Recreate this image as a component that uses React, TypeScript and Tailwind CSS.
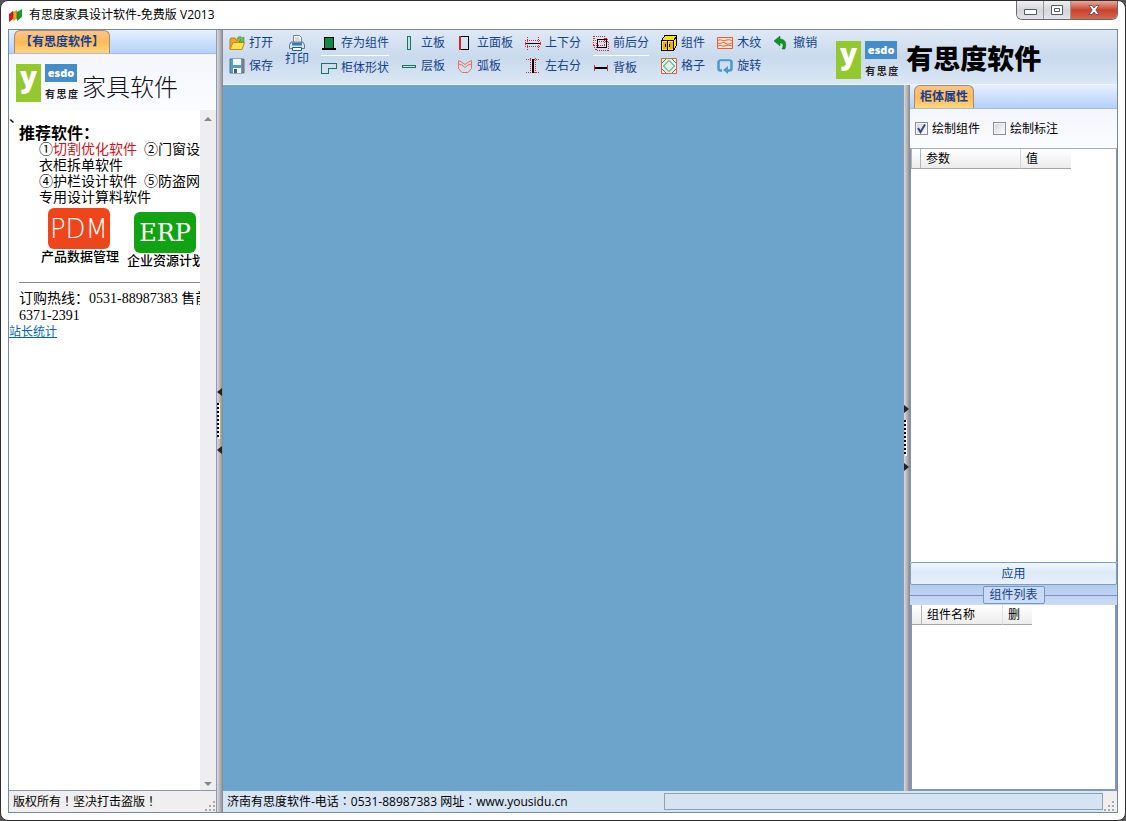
import { useState, type ReactNode } from 'react';

function TabStrip({ label, className = '' }: { label: string; className?: string }) {
  return (
    <div role="tablist" className={`flex h-6 shrink-0 items-end border-b border-[#a3bde0] bg-linear-to-b from-[#e6f0fd] to-[#b4d1fb] ${className}`}>
      <button
        role="tab"
        aria-selected="true"
        className="h-[23px] rounded-t-md border border-b-0 border-[#a48a70] bg-linear-to-b from-[#f9c58c] via-[#fdb95a] to-[#ffd67c] px-[5px] text-xs font-bold whitespace-nowrap text-[#123f91]"
      >
        {label}
      </button>
    </div>
  );
}

function Logo() {
  return (
    <div className="flex shrink-0 gap-1">
      <div className="flex h-[38px] w-[25px] justify-center bg-[#93c82e] font-['Open_Sans',sans-serif] text-[28px] leading-6 font-extrabold text-white">y</div>
      <div className="flex w-[33px] flex-col gap-1">
        <div className="h-[18px] w-8 bg-[#448cca] text-center font-['Open_Sans',sans-serif] text-[11px] leading-[18px] font-extrabold text-white">esdo</div>
        <div className="flex justify-between text-[10px] leading-4 font-bold text-[#222]">
          <span>有</span>
          <span>思</span>
          <span>度</span>
        </div>
      </div>
    </div>
  );
}

function Icon({ children }: { children: ReactNode }) {
  return (
    <svg width="16" height="16" viewBox="0 0 16 16" fill="none" className="shrink-0" aria-hidden="true">
      {children}
    </svg>
  );
}

const icons = {
  open: (
    <Icon>
      <path d="M1 14V4l1-1h4l1 2h6v9z" fill="#e9a928" stroke="#b97e12" />
      <path d="M1 14.500 4 7.500h11.500L13 14.500z" fill="#ffe04f" stroke="#c38b15" />
      <path d="M8 4c1-3 4-3 5-1l2-1v5h-5l2-2c-1-2-3-1-4-1z" fill="#68c35c" stroke="#318f3b" strokeWidth=".6" />
    </Icon>
  ),
  save: (
    <Icon>
      <path d="M1 1h14v14H1z" fill="#5b9cc2" stroke="#47788f" />
      <path d="M4 1h8v6H4z" fill="#eef4f8" />
      <path d="M4 10h8v5H4z" fill="#f7f7f7" />
      <path d="M5 11h3v4H5z" fill="#4c5c68" />
      <path d="M14 1v14" stroke="#c3593e" />
    </Icon>
  ),
  print: (
    <Icon>
      <path d="M4.500.500h6l2 2v5h-8z" fill="#fff" stroke="#76828c" />
      <path d="M6 3h4M6 5h5" stroke="#a8b4be" />
      <path d="M2 7h12l1.500 3v3.500H.500V10z" fill="#d9e5ee" stroke="#67798a" />
      <path d="M3 7.500h10v3H3z" fill="#2d7dbb" />
      <path d="M3.500 12.500h9v3h-9z" fill="#fff" stroke="#235c93" />
    </Icon>
  ),
  component: (
    <Icon>
      <g shapeRendering="crispEdges">
        <path d="M3.500 2.500h9v11h-9z" fill="#0b8a4b" stroke="#000" />
        <path d="M1 14h14" stroke="#000" strokeWidth="2" />
      </g>
    </Icon>
  ),
  shape: (
    <Icon>
      <path d="M.500 3.500h15v5h-8v5h-7z" stroke="#1c7360" shapeRendering="crispEdges" />
    </Icon>
  ),
  vertical: (
    <Icon>
      <path d="M6.500 1.500h3v13h-3z" stroke="#1c7360" fill="#bfe6e0" shapeRendering="crispEdges" />
    </Icon>
  ),
  horizontal: (
    <Icon>
      <path d="M1.500 7.500h13v2h-13z" stroke="#1c7360" fill="#bfe6e0" shapeRendering="crispEdges" />
    </Icon>
  ),
  face: (
    <Icon>
      <g shapeRendering="crispEdges">
        <path d="M3.500 1.500h8v13h-8z" stroke="#000" />
        <path d="M3 1v14" stroke="#d42030" strokeWidth="2" />
        <path d="M4 1.500h8M4 14.500h8M11.500 1v14" stroke="#000" />
      </g>
    </Icon>
  ),
  arc: (
    <Icon>
      <path d="M1.500 2.500 4.500 4 8 6.500 11.500 4l3-1.500v8L11 14.500H5l-3.500-4z" stroke="#ec7354" />
      <path d="M1.500 6 5 7l3 2.500L11 7l3.500-1" stroke="#ec7354" />
    </Icon>
  ),
  topBottom: (
    <Icon>
      <g shapeRendering="crispEdges">
        <path d="M0 5.500h16M0 11.500h16M2.500 2v13M13.500 2v13" stroke="#df2434" strokeDasharray="1 1" />
        <path d="M0 8.500h16" stroke="#000" />
        <path d="M0 7v3M15.500 7v3" stroke="#df2434" />
      </g>
    </Icon>
  ),
  leftRight: (
    <Icon>
      <g shapeRendering="crispEdges">
        <path d="M5.500 0v16M10.500 0v16M1 1.500h13M1 14.500h13" stroke="#df2434" strokeDasharray="1 1" />
        <path d="M8 1v14" stroke="#000" strokeWidth="2" />
      </g>
    </Icon>
  ),
  frontBack: (
    <Icon>
      <g shapeRendering="crispEdges">
        <path d="M.500 1.500h11v9H.500zM3.500 6.500h12v9h-12zM.500 1.500l3 5M11.500 1.500l4 5M.500 10.500l3 5" stroke="#df2434" strokeDasharray="1 1" />
        <path d="M4.500 4.500h9v8h-9z" stroke="#000" />
      </g>
    </Icon>
  ),
  back: (
    <Icon>
      <g shapeRendering="crispEdges">
        <path d="M2 8h12" stroke="#000" strokeWidth="2" />
        <path d="M1.500 5v6M14.500 5v6" stroke="#d42030" />
      </g>
    </Icon>
  ),
  cabinet: (
    <Icon>
      <g shapeRendering="crispEdges">
        <path d="M.500 5.500 4 .500h11.500v10L12.500 15.500H.500z" fill="#ffe600" stroke="#000" />
        <path d="M1 5.500h11.500V15M12.500 5.500l3-4" stroke="#000" />
        <path d="M2 7h4v7H2zM8 7h4v7H8z" fill="#f2a516" />
        <path d="M6.500 6v9M4.500 9v3M8.500 9v3" stroke="#000" />
      </g>
    </Icon>
  ),
  lattice: (
    <Icon>
      <path d="M.500.500h15v15H.500z" fill="#dff1e4" stroke="#e0603e" />
      <path d="M8 2.500 13.500 8 8 13.500 2.500 8zM1 5l4-4M11 1l4 4M1 11l4 4M15 11l-4 4" stroke="#3e8370" />
    </Icon>
  ),
  grain: (
    <Icon>
      <path d="M.500 2.500h15v11H.500z" fill="#fde3d2" stroke="#e5602f" />
      <path d="M1 5.500c3-2 4 1 7 0s4-1 7 0M1 8c3 2 4-2 7 0s4 1 7 0M1 11c3-2 4 1 7 0s4-1 7 0" stroke="#e5602f" />
    </Icon>
  ),
  rotate: (
    <Icon>
      <path d="M5 12.500H3.500a2 2 0 0 1-2-2v-6a2 2 0 0 1 2-2h9a2 2 0 0 1 2 2v6a2 2 0 0 1-2 2H10" stroke="#4e97cc" strokeWidth="2.500" />
      <path d="M11 8v8l-5-4z" fill="#4e97cc" />
      <path d="M3 3.500h10" stroke="#a6d2f0" />
    </Icon>
  ),
  undo: (
    <Icon>
      <path d="m1 6 6-5v3c5 0 7 4 5 10h-3c2-4 1-6-2-6v3z" fill="#149126" stroke="#0b6f1b" strokeWidth=".5" />
    </Icon>
  ),
};

function Tool({ icon, label }: { icon: keyof typeof icons; label: string }) {
  return (
    <button className="flex h-4 items-center gap-1 text-xs leading-4 whitespace-nowrap text-[#15428b]">
      {icons[icon]}
      <span>{label}</span>
    </button>
  );
}

function ToolColumn({ items, divided = false }: { items: [keyof typeof icons, string][]; divided?: boolean }) {
  return (
    <div className={`flex shrink-0 flex-col ${divided ? 'gap-1' : 'gap-[7px]'}`}>
      <Tool icon={items[0][0]} label={items[0][1]} />
      {divided && <div className="h-px bg-white" />}
      {items[1] && <Tool icon={items[1][0]} label={items[1][1]} />}
    </div>
  );
}

// direction is the side towards which the pane collapses
function Splitter({ direction, className }: { direction: 'left' | 'right'; className: string }) {
  const points = direction === 'left' ? '5,0 5,8 0,4' : '0,0 0,8 5,4';
  return (
    <div className={`flex w-[7px] shrink-0 flex-col items-start border-l border-[#8e9bb8] bg-linear-to-r from-[#d8dade] via-[#b4b5b9] to-[#84868b] ${className}`}>
      <svg width="5" height="66" viewBox="0 0 5 66" aria-hidden="true">
        <polygon points={points} fill="#222" />
        <path d="M2 15v36" stroke="#fff" strokeWidth="2" />
        <path d="M1 15v35" stroke="#000" strokeWidth="2" strokeDasharray="2 2" />
        <polygon points={points} fill="#222" transform="translate(0 58)" />
      </svg>
    </div>
  );
}

function Grip() {
  return (
    <svg width="12" height="12" viewBox="0 0 12 12" fill="#a5a9b2" className="shrink-0 self-end" aria-hidden="true">
      <path d="M9 1h2v2H9zM5 5h2v2H5zM9 5h2v2H9zM1 9h2v2H1zM5 9h2v2H5zM9 9h2v2H9z" />
    </svg>
  );
}

function CheckBox({ label, defaultChecked = false }: { label: string; defaultChecked?: boolean }) {
  const [checked, setChecked] = useState(defaultChecked);
  return (
    <label className="flex items-center gap-1 whitespace-nowrap">
      <span className="grid">
        <input
          type="checkbox"
          checked={checked}
          onChange={e => setChecked(e.target.checked)}
          className="col-start-1 row-start-1 size-[13px] appearance-none border border-[#8a8f96] bg-linear-to-br from-[#cfd3d8] to-white shadow-[inset_0_0_0_1px_#f4f4f4]"
        />
        {checked && (
          <svg width="13" height="13" viewBox="0 0 13 13" fill="none" className="pointer-events-none col-start-1 row-start-1" aria-hidden="true">
            <path d="m3 6 2.500 4L10 2.500" stroke="#33478b" strokeWidth="2" />
          </svg>
        )}
      </span>
      {label}
    </label>
  );
}

function LeftPanel() {
  return (
    <aside className="flex w-[207px] shrink-0 flex-col">
      <TabStrip label="【有思度软件】" className="pl-[5px]" />
      <div className="flex h-14 shrink-0 gap-1 bg-linear-to-b from-[#f4f6fc] to-[#fbfcff] pt-[10px] pl-[7px]">
        <Logo />
        <h1 className="pt-[7px] text-2xl leading-8 font-light whitespace-nowrap text-[#111]">家具软件</h1>
      </div>
      <div className="flex min-h-0 flex-1">
        <div className="min-w-0 flex-1 overflow-hidden font-['Liberation_Serif','Noto_Sans_CJK_SC',serif] text-sm leading-4 whitespace-nowrap">
          <p>、</p>
          <div className="pl-[10px]">
            <h2 className="text-base leading-4 font-bold">推荐软件：</h2>
            <ul className="pl-5">
              <li>①<a href="#cut" className="text-[#d8101c]">切割优化软件</a>&nbsp;&nbsp;②门窗设</li>
              <li>衣柜拆单软件</li>
              <li>④护栏设计软件&nbsp;&nbsp;⑤防盗网</li>
              <li>专用设计算料软件</li>
            </ul>
            <div className="flex gap-2 pt-[2px] pl-[22px] text-[13px] font-medium">
              <a href="#pdm">
                <span className="ml-[7px] flex h-[41px] w-[62px] items-center justify-center rounded-md bg-[#ef451b] font-['DejaVu_Sans',sans-serif] text-[26px] font-extralight text-white">PDM</span>
                <span>产品数据管理</span>
              </a>
              <a href="#erp" className="pt-1">
                <span className="ml-[7px] flex h-[41px] w-[62px] items-center justify-center rounded-md bg-[#12a312] font-['DejaVu_Serif',serif] text-2xl text-white">ERP</span>
                <span>企业资源计划</span>
              </a>
            </div>
            <hr className="mt-[13px] mb-2 border-[#888]" />
            <p>订购热线：0531-88987383 售前</p>
            <p className="leading-[17px]">6371-2391</p>
          </div>
          <a href="#stats" className="text-xs text-[#0066b8] underline">站长统计</a>
        </div>
        <div className="flex w-4 shrink-0 flex-col items-center justify-between bg-[#eeeef0] py-1">
          <svg width="8" height="8" viewBox="0 0 8 8" aria-hidden="true"><path d="M0 7 4 3l4 4z" fill="#888" /></svg>
          <svg width="8" height="4" viewBox="0 0 8 4" aria-hidden="true"><path d="M0 0h8L4 4z" fill="#888" /></svg>
        </div>
      </div>
      <footer className="flex h-[22px] shrink-0 items-center justify-between border-t border-[#8d97ad] bg-[#f0eeee] pl-1 font-['Open_Sans','Noto_Sans_CJK_TC',sans-serif]">
        <span>版权所有！坚决打击盗版！</span>
        <Grip />
      </footer>
    </aside>
  );
}

const headCell = 'h-5 border-b border-[#a5a5a5] bg-linear-to-b from-white to-[#ececec] p-0 text-left font-normal';

function RightPanel() {
  return (
    <aside className="flex w-[207px] shrink-0 flex-col bg-[#b5ceef]">
      <TabStrip label="柜体属性" className="pl-1" />
      <div className="flex h-10 shrink-0 items-center gap-[13px] border-b border-[#a0abb8] bg-linear-to-b from-[#f4f6fc] to-[#fbfcff] pl-[5px]">
        <CheckBox label="绘制组件" defaultChecked />
        <CheckBox label="绘制标注" />
      </div>
      <div className="min-h-0 flex-1 border-x border-[#8094bc] bg-white">
        <table className="border-separate border-spacing-0">
          <thead>
            <tr>
              <th className={`${headCell} w-[10px] border-x border-x-[#b5b5b5]`}></th>
              <th className={`${headCell} w-[100px] border-r border-r-[#d5d5d5] pl-[5px]`}>参数</th>
              <th className={`${headCell} w-[50px] pl-[5px]`}>值</th>
            </tr>
          </thead>
        </table>
      </div>
      <button className="h-[23px] shrink-0 rounded-xs border border-[#7f9cc8] bg-linear-to-b from-[#f0f6fd] via-[#dce9f8] to-[#e8f1fc] text-[#15428b]">应用</button>
      <div className="flex h-5 shrink-0 items-center bg-linear-to-b from-[#b3cbec] to-[#cbdcf4]">
        <div className="h-px flex-1 bg-[#6f93ca]" />
        <h2 className="flex h-[18px] items-center rounded-xs border border-[#7495cb] bg-[#cadcf5] px-[6px] text-[#15428b]">组件列表</h2>
        <div className="h-px flex-1 bg-[#6f93ca]" />
      </div>
      <div className="h-[186px] shrink-0 border-2 border-t-0 border-[#8095bf] bg-white">
        <table className="border-separate border-spacing-0">
          <thead>
            <tr>
              <th className={`${headCell} w-[10px] border-r border-r-[#b5b5b5]`}></th>
              <th className={`${headCell} w-20 pl-[5px]`}>组件名称</th>
              <th className={`${headCell} w-[30px] border-l border-l-[#e2e2e2] pl-[5px]`}>删</th>
            </tr>
          </thead>
        </table>
      </div>
    </aside>
  );
}

function TitleBar() {
  return (
    <header className="flex h-7 shrink-0 justify-between">
      <div className="flex items-center gap-[6px]">
        <svg width="15" height="13" viewBox="0 0 15 13" className="shrink-0" aria-hidden="true">
          <path d="M1 5 5 2v8l-4 3z" fill="#d91b12" />
          <path d="m5 3 4-2v9l-4 2z" fill="#f3a51c" />
          <path d="m9 3 5-3v8l-5 4z" fill="#189a2b" />
          <path d="M5 2v8M9 2v8" stroke="#303030" strokeWidth=".5" />
        </svg>
        <span className="whitespace-nowrap">有思度家具设计软件-免费版 V2013</span>
      </div>
      <div className="flex h-[19px] overflow-hidden rounded-b-md border border-t-0 border-[#696a70]">
        <button aria-label="最小化" className="flex w-[27px] items-center justify-center border-r border-[#96979c] bg-linear-to-b from-[#f0f0f1] via-[#d4d5d8] to-[#e3e4e6]">
          <svg width="13" height="6" viewBox="0 0 13 6" className="mt-1" aria-hidden="true"><path d="M.500.500h12v5H.500z" fill="#fff" stroke="#555968" /></svg>
        </button>
        <button aria-label="最大化" className="flex w-[27px] items-center justify-center border-r border-[#96979c] bg-linear-to-b from-[#f0f0f1] via-[#d4d5d8] to-[#e3e4e6]">
          <svg width="12" height="10" viewBox="0 0 12 10" aria-hidden="true">
            <path d="M.500.500h11v9H.500zM3.500 3.500h5v3h-5z" fill="#fff" stroke="#555968" />
          </svg>
        </button>
        <button aria-label="关闭" className="flex w-[46px] items-center justify-center bg-linear-to-b from-[#e6a79b] via-[#c8422b] to-[#d5684d]">
          <svg width="12" height="10" viewBox="0 0 12 10" aria-hidden="true">
            <path d="M1 .500h3l2 2.500L8 .500h3L7.800 5 11 9.500H8L6 7 4 9.500H1L4.200 5z" fill="#fff" stroke="#5d4248" strokeWidth=".8" />
          </svg>
        </button>
      </div>
    </header>
  );
}

export default function App() {
  return (
    <div className="h-screen bg-[#555] font-['Open_Sans','Noto_Sans_CJK_SC',sans-serif] text-xs leading-4 text-black">
      <div className="flex h-full flex-col rounded-lg border border-[#303030] bg-white px-[7px] pb-[7px]">
        <TitleBar />
        <div className="flex min-h-0 flex-1 border border-[#75899f]">
          <LeftPanel />
          <Splitter direction="left" className="pt-[358px]" />
          <main className="flex min-w-0 flex-1 flex-col">
            <div role="toolbar" className="flex h-[55px] shrink-0 gap-3 overflow-hidden border-b border-[#eef5fb] bg-linear-to-b from-[#dfe9f6] via-[#c9daed] to-[#dae7f5] pt-[5px] pl-[6px]">
              <ToolColumn items={[['open', '打开'], ['save', '保存']]} />
              <button className="flex shrink-0 flex-col items-center self-start leading-4 text-[#15428b]">
                {icons.print}
                <span>打印</span>
              </button>
              <ToolColumn divided items={[['component', '存为组件'], ['shape', '柜体形状']]} />
              <ToolColumn items={[['vertical', '立板'], ['horizontal', '层板']]} />
              <ToolColumn items={[['face', '立面板'], ['arc', '弧板']]} />
              <ToolColumn items={[['topBottom', '上下分'], ['leftRight', '左右分']]} />
              <ToolColumn divided items={[['frontBack', '前后分'], ['back', '背板']]} />
              <ToolColumn items={[['cabinet', '组件'], ['lattice', '格子']]} />
              <ToolColumn items={[['grain', '木纹'], ['rotate', '旋转']]} />
              <ToolColumn items={[['undo', '撤销']]} />
              <div className="flex shrink-0 gap-2 pt-[6px] pl-[7px]">
                <Logo />
                <span className="text-[27px] leading-9 font-black whitespace-nowrap">有思度软件</span>
              </div>
            </div>
            <div className="flex min-h-0 flex-1">
              <div className="flex-1 bg-[#6ca4cc]" />
              <Splitter direction="right" className="pt-80" />
              <RightPanel />
            </div>
            <footer className="flex h-[21px] shrink-0 items-center bg-[#d6e5f3] font-['Open_Sans','Noto_Sans_CJK_TC',sans-serif]">
              <span className="flex-1 pl-1 whitespace-nowrap">济南有思度软件-电话：0531-88987383 网址：www.yousidu.cn</span>
              <div className="h-[17px] flex-1 border border-[#8fa3ab] bg-[#d4e4f3]" />
              <div className="flex h-full w-[14px] bg-[#f0eeee]">
                <Grip />
              </div>
            </footer>
          </main>
        </div>
      </div>
    </div>
  );
}
